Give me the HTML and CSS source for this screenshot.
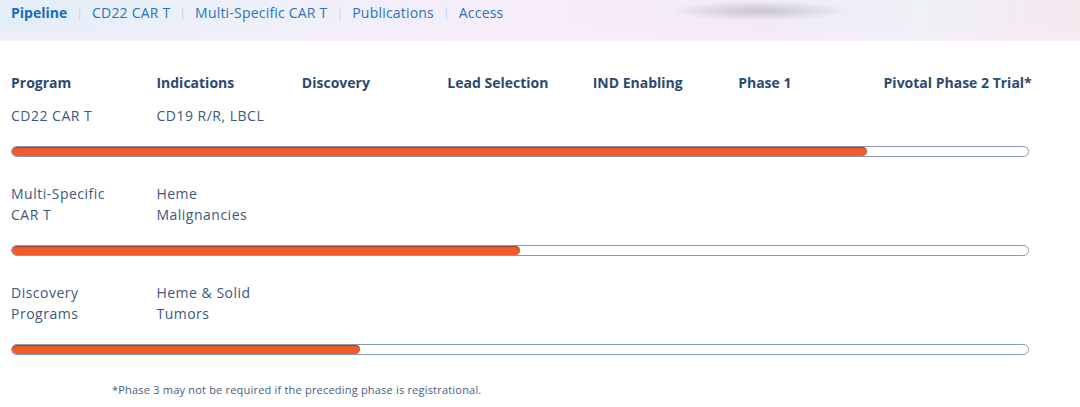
FILE: index.html
```html
<!DOCTYPE html>
<html lang="en">
<head>
  <meta charset="UTF-8">
  <meta name="viewport" content="width=device-width, initial-scale=1">
  <title>Pipeline</title>
  <link rel="stylesheet" href="styles.css">
</head>
<body>

  <nav class="subnav">
    <a href="#" class="active">Pipeline</a>
    <span class="sep">|</span>
    <a href="#">CD22 CAR T</a>
    <span class="sep">|</span>
    <a href="#">Multi-Specific CAR T</a>
    <span class="sep">|</span>
    <a href="#">Publications</a>
    <span class="sep">|</span>
    <a href="#">Access</a>
  </nav>

  <div class="pipeline">
    <div class="head">
      <div>Program</div>
      <div>Indications</div>
      <div>Discovery</div>
      <div>Lead Selection</div>
      <div>IND Enabling</div>
      <div>Phase 1</div>
      <div>Pivotal Phase 2 Trial*</div>
    </div>

    <div class="row first">
      <div class="cell">CD22 CAR T</div>
      <div class="cell">CD19 R/R, LBCL</div>
    </div>
    <div class="track"><div class="fill" style="width: 84.2%"></div></div>

    <div class="row">
      <div class="cell">Multi-Specific<br>CAR T</div>
      <div class="cell">Heme<br>Malignancies</div>
    </div>
    <div class="track"><div class="fill" style="width: 50%"></div></div>

    <div class="row">
      <div class="cell">Discovery<br>Programs</div>
      <div class="cell">Heme &amp; Solid<br>Tumors</div>
    </div>
    <div class="track"><div class="fill" style="width: 34.3%"></div></div>

    <p class="note">*Phase 3 may not be required if the preceding phase is registrational.</p>
  </div>

</body>
</html>
```

FILE: styles.css
```css
body {
  margin: 0;
  font-family: "Open Sans", Arial, sans-serif;
  background: #fff;
  color: #3c587c;
}

.subnav {
  height: 41px;
  box-sizing: border-box;
  padding: 4px 0 0 11px;
  display: flex;
  align-items: flex-start;
  gap: 9px;
  font-size: 14px;
  line-height: 18px;
  letter-spacing: 0.2px;
  background:
    radial-gradient(ellipse 90px 10px at 760px 11px, rgba(150, 150, 170, 0.45), rgba(150, 150, 170, 0) 100%),
    linear-gradient(180deg, rgba(255, 255, 255, 0) 60%, rgba(250, 238, 250, 0.6) 100%),
    linear-gradient(90deg, #e3eef8 0%, #eef0f9 25%, #f7edf9 50%, #f1eaf6 70%, #eef1f6 85%, #f5e8ef 100%);
}

.subnav a {
  color: #2a74ba;
  text-decoration: none;
}

.subnav a.active {
  font-weight: 700;
  color: #1a6bb8;
  letter-spacing: 0;
}

.subnav .sep {
  color: #c6d2e0;
  font-size: 12px;
}

.pipeline {
  padding: 32px 51px 0 11px;
}

.head,
.row {
  display: grid;
  grid-template-columns: repeat(7, minmax(0, 1fr));
}

.head {
  font-size: 14px;
  line-height: 20px;
  font-weight: 700;
  color: #2c4b70;
  white-space: nowrap;
}

.row {
  font-size: 14px;
  line-height: 21px;
  letter-spacing: 0.5px;
  margin-top: 12px;
}

.track + .row {
  margin-top: 26px;
}

.track {
  margin-top: 20px;
  height: 11px;
  box-sizing: border-box;
  border: 1px solid #8799b2;
  border-radius: 6px;
  background: #fff;
  overflow: hidden;
}

.fill {
  height: 100%;
  border-radius: 6px;
  background: #f15a29;
  box-shadow: inset 0 1px 1px rgba(40, 40, 60, 0.45);
}

.note {
  margin: 27px 0 0 101px;
  font-size: 11px;
  line-height: 16px;
  letter-spacing: 0.2px;
  color: #4a6080;
}
```
